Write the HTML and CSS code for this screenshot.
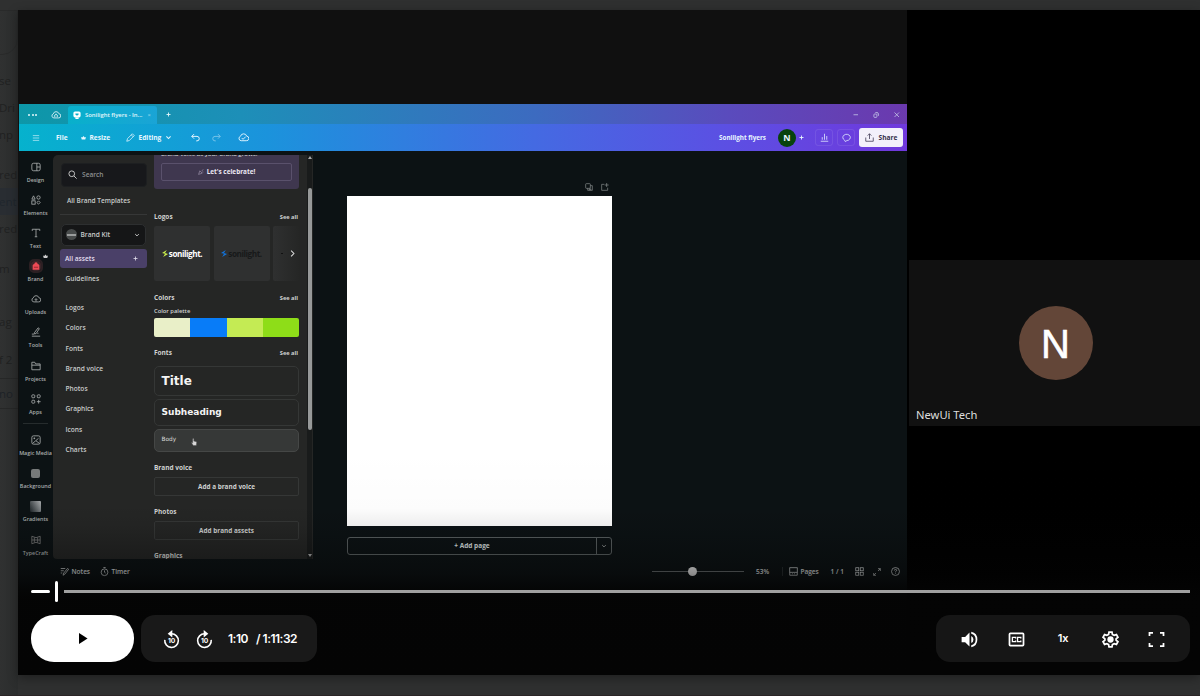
FILE: index.html
```html
<!DOCTYPE html>
<html lang="en">
<head>
<meta charset="utf-8">
<title>Recording player</title>
<link rel="stylesheet" href="styles.css">
</head>
<body>
<svg width="0" height="0" class="defs">
  <defs>
    <symbol id="chev" viewBox="0 0 10 10"><path d="M2 3.5l3 3 3-3"/></symbol>
    <symbol id="plus" viewBox="0 0 10 10"><path d="M5 1v8M1 5h8"/></symbol>
    <symbol id="cloud" viewBox="0 0 24 24"><path d="M7 19a5 5 0 0 1-1.500-9.700A7 7 0 0 1 19 9a5 5 0 0 1-1 10z"/></symbol>
  </defs>
</svg>
<div class="page">
  <aside class="backdrop">
    <div class="chip"></div>
    <p class="frag f1">se</p><p class="frag">Dri</p><p class="frag">np</p>
    <p class="frag f2">red</p><p class="frag hl">ent</p><p class="frag">red</p>
    <p class="frag f3">m</p><p class="frag f4">ag</p><p class="frag f5">f 2</p><p class="frag f6">no</p>
  </aside>

  <main class="player">
    <div class="stage">
      <section class="recording">
        <div class="editor">
          <header class="tabs">
            <span class="dots"><i></i><i></i><i></i></span>
            <svg class="ic home" viewBox="0 0 24 24"><use href="#cloud"/><path d="M9 17v-5l3-2.500 3 2.500v5"/></svg>
            <div class="tab">
              <svg class="tabic" viewBox="0 0 10 10"><rect x="0.500" y="0.500" width="9" height="7.500" rx="2"/><path d="M3 8h4v2H3z"/><path class="cut" d="M3 3h4v1.500L5 6 3 4.500z"/></svg>
              <span>Sonilight flyers - In...</span><em>×</em>
            </div>
            <svg class="ic newtab"><use href="#plus"/></svg>
            <div class="wins">
              <svg class="ic" viewBox="0 0 10 10"><path d="M2 5h6"/></svg>
              <svg class="ic" viewBox="0 0 10 10"><rect x="2.500" y="4" width="4" height="4.500" rx="1"/><path d="M4.500 2h2a2 2 0 0 1 2 2v2.500"/></svg>
              <svg class="ic" viewBox="0 0 10 10"><path d="M2 2l6 6M8 2l-6 6"/></svg>
            </div>
          </header>
          <div class="toolbar">
            <svg class="ic burger" viewBox="0 0 10 10"><path d="M1 2h8M1 5h8M1 8h8"/></svg>
            <b class="file">File</b>
            <svg class="crown" viewBox="0 0 10 10"><path d="M0 3l2.500 1L5 1l2.500 3L10 3 8.500 8h-7z"/></svg>
            <b class="resize">Resize</b>
            <svg class="ic pen" viewBox="0 0 12 12"><path d="M1 11l1-3.500L8.500 1l2.500 2.500L4.500 10zM7 2.500L9.500 5"/></svg>
            <b class="editing">Editing</b>
            <svg class="ic chv"><use href="#chev"/></svg>
            <svg class="ic undo" viewBox="0 0 12 12"><path d="M4 1.500L1 4.500l3 3M1 4.500h7a3 3 0 0 1 0 6H7"/></svg>
            <svg class="ic redo" viewBox="0 0 12 12"><path d="M8 1.500l3 3-3 3M11 4.500H4a3 3 0 0 0 0 6h1"/></svg>
            <svg class="ic saved" viewBox="0 0 24 24"><use href="#cloud"/><path d="M8 13l3 3 6-6"/></svg>
            <div class="right">
              <b class="doc">Sonilight flyers</b>
              <span class="me">N</span>
              <svg class="ic add"><use href="#plus"/></svg>
              <span class="tbtn"><svg class="ic" viewBox="0 0 12 12"><path d="M1 11h10M3 9V5.500M6 9V1M9 9V4"/></svg></span>
              <span class="tbtn cm"><svg class="ic" viewBox="0 0 12 12"><path d="M3.500 9.500a5 4.200 0 1 1 3 .6L4.500 11.500z"/></svg></span>
              <span class="share"><svg viewBox="0 0 12 12"><path d="M1 6v5h10V6M6 8V1M3.500 3.500L6 1l2.500 2.500"/></svg>Share</span>
            </div>
          </div>
          <div class="work">
            <nav class="rail">
              <div><svg viewBox="0 0 12 12"><rect x="1" y="1.500" width="10" height="9" rx="2"/><path d="M7 1.500v9M7 6h4"/></svg>Design</div>
              <div><svg viewBox="0 0 12 12"><path d="M3 1l2 4H1z"/><circle cx="9" cy="3" r="2"/><rect x="1" y="7" width="4" height="4"/><path d="M9 7l2 2-2 2-2-2z"/></svg>Elements</div>
              <div><svg viewBox="0 0 12 12"><path d="M1.500 3.500v-2h9v2M6 1.500v9M4.500 10.500h3"/></svg>Text</div>
              <div class="on"><svg viewBox="0 0 12 12"><path d="M2 5q0-1 2-1.500Q4 1.500 6 1.500T8 3.500Q10 4 10 5v5.500H2z"/><path class="slot" d="M3.500 7.500h5"/></svg>Brand<span class="tiny"><svg viewBox="0 0 10 10"><path d="M0 3l2.500 1L5 1l2.500 3L10 3 8.500 8h-7z"/></svg></span></div>
              <div><svg viewBox="0 0 24 24"><use href="#cloud"/><path d="M12 18v-6M9 14l3-3 3 3"/></svg>Uploads</div>
              <div><svg viewBox="0 0 12 12"><path d="M4 7l4.500-6L10 2 6 8H4zM1 8.500h3M1 11h10M9 7.500H7.500"/></svg>Tools</div>
              <div><svg viewBox="0 0 12 12"><path d="M1 10.500v-9h3.500l1 2H11v7zM1 5h10"/></svg>Projects</div>
              <div><svg viewBox="0 0 12 12"><rect x="1" y="1" width="3.500" height="3.500" rx="1"/><rect x="7.500" y="1" width="3.500" height="3.500" rx="1"/><rect x="1" y="7.500" width="3.500" height="3.500" rx="1"/><path d="M9.200 7v4.500M7 9.200h4.500"/></svg>Apps</div>
              <hr>
              <div><svg viewBox="0 0 12 12"><rect x="1" y="1" width="10" height="10" rx="2"/><path d="M2 10l7-6M6 7l4 3M4 3v2M3 4h2"/></svg>Magic Media</div>
              <div><span class="bgsq"></span>Background</div>
              <div><span class="bgsq grad"></span>Gradients</div>
              <div><svg class="tc" viewBox="0 0 12 12"><path d="M1 1.500Q6 5 11 1.500v9Q6 7 1 10.500zM4 3v6M8 3v6M1 6h10"/></svg>TypeCraft</div>
            </nav>
            <div class="body">
              <div class="upper">
                <div class="panel">
                  <div class="menu">
                    <div class="search"><svg viewBox="0 0 12 12"><circle cx="5" cy="5" r="3.800"/><path d="M8 8l3.500 3.500"/></svg>Search</div>
                    <div class="tpl">All Brand Templates</div>
                    <div class="kit"><span class="disc"><i></i></span>Brand Kit<svg class="ic"><use href="#chev"/></svg></div>
                    <div class="assets-on">All assets<svg class="ic"><use href="#plus"/></svg></div>
                    <div class="guide">Guidelines</div>
                    <ul><li>Logos</li><li>Colors</li><li>Fonts</li><li>Brand voice</li><li>Photos</li><li>Graphics</li><li>Icons</li><li>Charts</li></ul>
                  </div>
                  <div class="assets">
                    <div class="promo"><p>Brand voice as your brand grows.</p><div class="cele"><svg viewBox="0 0 10 10"><path d="M1 9l2-6 4 4z"/><path d="M6 3l3-2M7 5h2"/></svg>Let's celebrate!</div></div>
                    <div class="head h-logos"><b>Logos</b><span>See all</span></div>
                    <div class="tiles">
                      <div class="tile"><svg viewBox="0 0 10 12"><path d="M8 0L0 5l5 1.500L2 12l8-5-5-2z"/></svg><b>sonilight.</b></div>
                      <div class="tile blue"><svg viewBox="0 0 10 12"><path d="M8 0L0 5l5 1.500L2 12l8-5-5-2z"/></svg><b>sonilight.</b></div>
                      <div class="tile last"><i></i><svg class="ic" viewBox="0 0 10 10"><path d="M3 1l4 4-4 4"/></svg></div>
                    </div>
                    <div class="head h-colors"><b>Colors</b><span>See all</span></div>
                    <div class="sub">Color palette</div>
                    <div class="swatches"><i class="s1"></i><i class="s2"></i><i class="s3"></i><i class="s4"></i></div>
                    <div class="head h-fonts"><b>Fonts</b><span>See all</span></div>
                    <div class="font t1">Title</div>
                    <div class="font t2">Subheading</div>
                    <div class="font t3">Body<svg class="hand" viewBox="0 0 12 16"><path d="M3.500 1.500q1.300-1.200 2.200 0V6l5 1.500q.8.500.6 2L10.500 15h-6L1 9.500q.3-1.400 2.500 0z"/></svg></div>
                    <div class="head h-voice"><b>Brand voice</b></div>
                    <div class="btn">Add a brand voice</div>
                    <div class="head h-photos"><b>Photos</b></div>
                    <div class="btn">Add brand assets</div>
                    <div class="head h-graph"><b>Graphics</b></div>
                  </div>
                  <div class="scroll"><i class="up"></i><i class="thumb"></i><i class="down"></i></div>
                </div>
                <div class="canvas">
                  <div class="sheetwrap">
                    <div class="sheet-tools">
                      <svg viewBox="0 0 12 12"><rect x="1" y="1" width="7" height="7" rx="1"/><path d="M8 4h3v7H4V8M5.500 9.500h4M7.500 7v4"/></svg>
                      <svg viewBox="0 0 12 12"><path d="M5 2H1v9h9V7M8.500 0v6M5.500 3h6"/></svg>
                    </div>
                    <div class="sheet"></div>
                    <div class="addpage"><span>+ Add page</span><em><svg class="ic"><use href="#chev"/></svg></em></div>
                  </div>
                </div>
              </div>
              <footer class="status">
                <svg viewBox="0 0 12 12"><path d="M1 2h6M1 5h4M1 8h2M4 11l1-3 5-6 1.500 1-5 6.500z"/></svg><span class="notes">Notes</span>
                <svg viewBox="0 0 12 12"><circle cx="6" cy="7" r="4.500"/><path d="M6 4.500V7l1.500 1M4.500.7h3"/></svg><span>Timer</span>
                <div class="rt">
                  <div class="zoom"><i></i></div><span class="pct">53%</span>
                  <svg class="pg" viewBox="0 0 12 12"><rect x="1" y="1" width="10" height="6"/><path d="M1 7v4h10V7M4 9h1M7 9h1"/></svg><span class="pages">Pages</span><span class="num">1 / 1</span>
                  <svg viewBox="0 0 12 12"><rect x="1" y="1" width="4" height="4"/><rect x="7" y="1" width="4" height="4"/><rect x="1" y="7" width="4" height="4"/><rect x="7" y="7" width="4" height="4"/></svg>
                  <svg class="ex" viewBox="0 0 12 12"><path d="M7.500 1H11v3.500M11 1L7.500 4.500M4.500 11H1V7.500M1 11l3.500-3.500"/></svg>
                  <svg class="help" viewBox="0 0 12 12"><circle cx="6" cy="6" r="5.300"/><path d="M4.500 4.700q0-1.500 1.500-1.500t1.500 1.300Q7.500 5.500 6 6.300V7M6 8.300v.8"/></svg>
                </div>
              </footer>
            </div>
          </div>
        </div>
      </section>
      <section class="people">
        <div class="person"><div class="avatar">N</div><span class="name">NewUi Tech</span></div>
      </section>
    </div>

    <div class="controls">
      <div class="progress"><i class="played"></i><i class="knob"></i><i class="left"></i></div>
      <div class="bar">
        <div class="play"><svg viewBox="0 0 10 12"><path d="M0 0l9.500 6L0 12z"/></svg></div>
        <div class="pill skip">
          <svg viewBox="0 0 24 24"><path d="M3.500 12.500a8.600 8.600 0 1 0 8.500-7.700h-2"/><path class="solid" d="M13 0v9.600L7.200 4.800z"/><text x="12" y="16.500">10</text></svg>
          <svg viewBox="0 0 24 24"><path d="M20.500 12.500A8.600 8.600 0 1 1 12 4.800h2"/><path class="solid" d="M11 0v9.600L16.800 4.800z"/><text x="12" y="16.500">10</text></svg>
          <span class="now">1:10</span><span class="total">/ 1:11:32</span>
        </div>
        <div class="pill opts">
          <svg viewBox="0 0 24 24"><path class="fill" d="M3 9v6h4l5 5V4L7 9zM16.500 12A4.500 4.500 0 0 0 14 7.970v8.050A4.500 4.500 0 0 0 16.500 12zM14 3.230v2.060a7 7 0 0 1 0 13.420v2.060a9 9 0 0 0 0-17.540z"/></svg>
          <svg viewBox="0 0 24 24"><rect x="4" y="5" width="16" height="14" rx="1"/><path class="thin" d="M11 10.800V9.600H7.300v4.800H11v-1.200M16.900 10.800V9.600h-3.700v4.800h3.700v-1.200"/></svg>
          <b>1x</b>
          <svg class="gear" viewBox="0 0 24 24"><path d="M10.300 3.500h3.400l.5 2.700 2 1.100 2.600-.9 1.700 3-2.100 1.800v1.600l2.100 1.800-1.700 3-2.600-.9-2 1.100-.5 2.700h-3.400l-.5-2.700-2-1.100-2.600.9-1.700-3 2.100-1.800v-1.600L3.500 9.400l1.700-3 2.600.9 2-1.100z"/><circle class="fill" cx="12" cy="12" r="3.600"/></svg>
          <svg viewBox="0 0 24 24"><path d="M4 8V4.500h4M16 4.500h4V8M20 16v3.500h-4M8 19.500H4V16"/></svg>
        </div>
      </div>
    </div>
  </main>
</div>
</body>
</html>
```

FILE: styles.css
```css
* { box-sizing: border-box; margin: 0; padding: 0; }
html, body { width: 1200px; height: 696px; overflow: hidden; }
body { background: #2f3030; font-family: "Open Sans", "Noto Sans", sans-serif; }
.defs { display: block; }
i, em { font-style: normal; display: block; }
b { font-weight: 700; }
svg { fill: none; stroke: currentColor; stroke-width: 1; flex: none; overflow: visible; }
ul { list-style: none; }

.page { height: 696px; display: grid; grid-template-columns: 18px 1182px; padding-top: 10px; position: relative; border-bottom: 1px solid #2b2526; overflow: hidden; }
.backdrop { overflow: hidden; background: linear-gradient(90deg, #303131, #2b2d2d); font-size: 11.500px; color: #202121; white-space: nowrap; }
.chip { height: 45px; margin-left: -30px; border: 1px solid #292a2a; border-radius: 0 0 16px 0; }
.frag { height: 27px; line-height: 27px; margin-left: -1px; }
.f1 { margin-top: 12px; }
.f2 { margin-top: 13px; }
.hl { background: #292d32; color: #20262d; }
.f3 { margin-top: 13px; }
.f4 { margin-top: 26px; }
.f5 { margin-top: 11px; }
.f6 { margin-top: 5px; border-top: 1px solid #262727; border-bottom: 1px solid #262727; height: 31px; line-height: 29px; color: #1d2227; }

.player { position: relative; height: 665px; background: #000; box-shadow: 0 3px 10px rgba(0,0,0,.35); }
.stage { display: flex; height: 665px; }
.recording { width: 889px; padding: 94px 0 0 1px; background: #101010; }
.editor { height: 571px; display: grid; grid-template-rows: 20px 27px 1fr; background: #0c1214; color: #d5d8d8; font-size: 6.5px; }
.ic { width: 8px; height: 8px; }

.tabs { display: flex; align-items: center; background: linear-gradient(90deg, #0d97a8, #1d8fb8 25%, #3c6bc0 58%, #5a4bbd 80%, #6b39ae); color: #e4f7fb; padding-top: 1px; }
.dots { display: flex; gap: 1.500px; margin-left: 9px; width: 23px; }
.dots i { width: 2px; height: 2px; border-radius: 1px; background: #e4f7fb; }
.home { width: 10px; height: 10px; stroke-width: 2; margin-right: 7px; }
.tab { width: 89px; height: 18px; align-self: flex-end; margin-top: 1px; background: linear-gradient(90deg, #08b0cb, #1aa4d6); border-radius: 3px 3px 0 0; display: flex; align-items: center; padding-left: 5px; font-weight: 600; font-size: 5.900px; white-space: nowrap; }
.tabic { width: 8px; height: 8px; fill: #fff; stroke: none; margin-right: 4px; }
.tabic .cut { fill: #0aaccb; }
.tab em { margin-left: 5px; opacity: .5; }
.newtab { width: 5px; height: 5px; margin-left: 9px; stroke-width: 1.800; }
.wins { margin-left: auto; display: flex; gap: 13px; margin-right: 7px; opacity: .8; }
.wins svg { width: 7.500px; height: 7.500px; }
.toolbar { display: flex; align-items: center; background: linear-gradient(90deg, #06b2cd, #1b93dc 28%, #446ae2 58%, #5c4fe3 80%, #7038dc); color: #e8f7ff; white-space: nowrap; font-size: 6.600px; }
.burger { margin-left: 13px; margin-right: 16px; opacity: .75; }
.file { width: 25px; }
.crown { width: 5px; height: 6px; fill: currentColor; stroke: none; margin-right: 3.500px; }
.resize { width: 36px; }
.pen { width: 9px; height: 9px; }
.editing { margin-left: 4px; width: 26px; }
.chv { width: 7px; height: 7px; margin-right: 19px; stroke-width: 1.500; }
.undo, .redo { width: 9px; height: 9px; stroke-width: 1.300; margin-right: 12.500px; }
.redo { opacity: .45; margin-right: 17px; }
.saved { width: 11px; height: 11px; stroke-width: 2; }
.right { margin-left: auto; display: flex; align-items: center; margin-right: 4px; }
.doc { margin-right: 12px; font-size: 6.300px; }
.me { width: 18px; height: 18px; border-radius: 50%; background: #07430d; font-size: 9px; font-weight: 700; display: grid; place-items: center; line-height: 1; }
.add { width: 5px; height: 5px; margin: 0 11px 0 3px; stroke-width: 1.800; }
.tbtn { width: 18px; height: 17px; border: 1px solid rgba(255,255,255,.09); border-radius: 3px; display: grid; place-items: center; margin-right: 4px; }
.tbtn svg { width: 9px; height: 9px; }
.share { width: 44px; height: 19px; background: #f3f0fb; color: #35304c; border-radius: 3px; display: flex; align-items: center; justify-content: center; gap: 5px; font-weight: 700; }
.share svg { width: 9px; height: 9px; }

.work { display: flex; height: 524px; }
.rail { width: 33px; margin-right: 1px; padding-top: 9.500px; font-size: 5.400px; font-weight: 600; color: #a9adad; }
.rail div { height: 33.200px; display: flex; flex-direction: column; align-items: center; gap: 4px; line-height: 8px; white-space: nowrap; position: relative; }
.rail svg { width: 10px; height: 10px; margin-top: 1px; }
.rail svg[viewBox="0 0 24 24"] { stroke-width: 2; }
.rail hr { border: 0; border-top: 1px solid #262c2d; margin: -3px 4px 10px; }
.rail .on svg { background: #3b2428; border-radius: 3px; fill: #ed4a55; stroke: none; outline: 2px solid #2c2023; }
.rail .on .slot { stroke: #8d2028; }
.rail .on .tiny { position: absolute; right: 4px; top: -7px; }
.rail .on .tiny svg { width: 5px; height: 5px; background: none; outline: 0; fill: #ccc; }
.bgsq { width: 9px; height: 9px; border-radius: 2px; background: #777a7a; margin: 2px 0 0; }
.bgsq.grad { width: 11px; height: 11px; border-radius: 1px; margin: 1px 0 -1px; background: linear-gradient(60deg, #1b2225, #a8abad); }
.tc { color: #777; }

.body { width: 854px; display: flex; flex-direction: column; }
.upper { display: flex; height: 408px; }
.panel { width: 260px; height: 404px; margin-top: 4px; background: #252625; border-radius: 5px 0 0 4px; display: flex; overflow: hidden; }
.menu { width: 101px; padding: 7.500px 7px 0 7px; color: #c9cbca; font-size: 6.600px; font-weight: 600; }
.search { width: 86px; margin-left: 1px; height: 24.500px; border: 1px solid #1d1f21; border-radius: 4px; background: #17181b; display: flex; align-items: center; padding-left: 6px; gap: 5px; color: #8e9090; }
.search svg { width: 9px; height: 9px; color: #c4c4c4; stroke-width: 1.300; }
.tpl { height: 28px; line-height: 27px; padding-left: 7px; border-bottom: 1px solid #363737; white-space: nowrap; font-size: 6.500px; }
.kit { margin: 8.500px 0 3.500px 1px; width: 85px; height: 22px; background: #151617; border: 1px solid #2d2f30; border-radius: 5px; display: flex; align-items: center; padding: 0 5px 0 4px; gap: 3.500px; }
.kit .disc { width: 11px; height: 11px; border-radius: 50%; background: #484b4b; display: grid; place-items: center; }
.kit .disc i { width: 9px; height: 2px; background: #9a9c9c; }
.kit .ic { width: 6px; height: 6px; margin-left: auto; stroke-width: 1.600; }
.assets-on { width: 87px; height: 19px; background: #4a4068; border-radius: 3px; display: flex; align-items: center; justify-content: space-between; padding: 0 9px 0 5px; color: #e2deee; }
.assets-on .ic { width: 5px; height: 5px; stroke-width: 1.600; }
.guide { height: 22px; line-height: 22px; padding-left: 5.500px; margin-bottom: 7px; }
.menu li { height: 20.300px; line-height: 21px; padding-left: 5.500px; }

.assets { width: 145px; color: #d0d2d1; }
.promo { height: 33.500px; background: #3f374f; border-radius: 0 0 3px 3px; padding: 0 7px; }
.promo p { font-size: 6px; font-weight: 600; height: 8px; line-height: 8px; position: relative; top: -5px; white-space: nowrap; }
.cele { height: 18px; border: 1px solid #5a516c; border-radius: 2px; display: flex; align-items: center; justify-content: center; gap: 3px; font-weight: 700; font-size: 6.400px; color: #ebe8f2; padding-bottom: 1px; }
.cele svg { width: 6px; height: 6px; color: #a59ab4; }
.head { display: flex; justify-content: space-between; align-items: center; height: 10px; font-size: 6.500px; padding-right: 1px; }
.head span { font-size: 5.700px; font-weight: 700; }
.h-logos { margin-top: 23px; }
.tiles { display: flex; gap: 3.500px; height: 55px; margin-top: 4px; overflow: hidden; }
.tile { width: 56px; height: 55px; flex: none; background: #2f3030; border-radius: 2px; display: flex; align-items: center; justify-content: center; gap: 1px; color: #fff; font-size: 8.200px; letter-spacing: -.45px; }
.tile svg { width: 6px; height: 9px; fill: #c9ee4c; stroke: none; }
.tile.blue { color: #17191a; }
.tile.blue svg { fill: #1272d8; }
.tile.last { width: 27px; background: linear-gradient(90deg, #2f3030, #252625); justify-content: flex-start; padding-left: 8px; }
.tile.last i { width: 2px; height: 1px; background: #111; }
.tile.last .ic { fill: none; stroke: #ddd; stroke-width: 1.500; width: 7px; height: 7px; margin-left: 5px; }
.h-colors { margin-top: 12px; }
.sub { height: 9px; line-height: 9px; font-size: 5.800px; font-weight: 600; margin: 4px 0 2px; }
.swatches { display: grid; grid-template-columns: repeat(4, 1fr); height: 19px; border-radius: 2px; overflow: hidden; }
.s1 { background: #e9efc8; } .s2 { background: #087cf8; } .s3 { background: #c4eb54; } .s4 { background: #8edd18; }
.h-fonts { margin: 11px 0 8px; }
.font { border: 1px solid #353736; border-radius: 5px; display: flex; align-items: center; padding-left: 6.500px; font-family: "DejaVu Sans", sans-serif; color: #f4f4f4; }
.t1 { height: 30px; font-size: 12px; font-weight: 700; }
.t2 { height: 27px; margin-top: 3px; font-size: 9px; font-weight: 700; }
.t3 { height: 23px; margin-top: 3px; font-size: 5.800px; background: #363837; border-color: #454746; padding-bottom: 2px; color: #d8d8d8; }
.hand { width: 6px; height: 10px; margin: 6px 0 0 15px; fill: #d8d8d8; stroke: #555; }
.h-voice { margin-top: 11px; }
.btn { height: 19px; margin-top: 4px; border: 1px solid #353736; border-radius: 2px; display: grid; place-items: center; font-size: 6.400px; font-weight: 700; }
.h-photos { margin-top: 11px; }
.h-graph { margin-top: 11px; }
.scroll { width: 5px; margin-left: 8px; background: #191b1b; display: flex; flex-direction: column; align-items: center; padding: 1px 0 2px; }
.up, .down { border: 2px solid transparent; border-top-width: 0; border-bottom: 3px solid #a7a7a7; }
.down { border-bottom-width: 0; border-top: 3px solid #a7a7a7; margin-top: auto; }
.thumb { width: 4px; height: 242px; border-radius: 2px; background: #979999; margin-top: 29px; }

.canvas { flex: 1; padding: 31px 0 0 34px; }
.sheetwrap { width: 265px; }
.sheet-tools { height: 13.500px; display: flex; justify-content: flex-end; gap: 8px; padding: 1px 3px 0 0; color: #8c9191; }
.sheet-tools svg { width: 8px; height: 8px; }
.sheet { height: 330px; background: #fff; }
.addpage { margin-top: 11px; height: 18.500px; border: 1px solid #5a6061; border-radius: 3px; display: flex; font-weight: 700; color: #dfe2e2; font-size: 6.500px; }
.addpage span { flex: 1; display: grid; place-items: center; }
.addpage em { width: 15px; border-left: 1px solid #5a6061; display: grid; place-items: center; }
.addpage .ic { width: 6px; height: 6px; }
.status { height: 25px; display: flex; align-items: center; padding: 0 7px 0 7px; font-size: 6.500px; font-weight: 600; color: #e8ecec; }
.status svg { width: 9px; height: 9px; margin-right: 2.500px; }
.notes { width: 28.500px; }
.rt { margin-left: auto; display: flex; align-items: center; }
.zoom { width: 92px; height: 9px; background: linear-gradient(#6b7172, #6b7172) center / 100% 1px no-repeat; margin-right: 12px; }
.zoom i { width: 9px; height: 9px; margin-left: 35.500px; border-radius: 50%; background: #fff; }
.pct { width: 27px; border-right: 1px solid #2a3032; margin-right: 6px; }
.pages { width: 30px; }
.num { width: 24px; }
.status .ex { margin: 0 10px 0 7px; width: 8px; height: 8px; }
.status .help { margin-right: 0; width: 9px; height: 9px; }

.people { flex: 1; background: #000; padding: 250px 0 0 2px; }
.person { height: 166px; background: #111; display: grid; place-items: center; position: relative; padding: 0 0 1px 2px; }
.avatar { width: 74px; height: 74px; border-radius: 50%; background: #634638; color: #fff; font: 400 40px/76px "Liberation Sans", sans-serif; text-align: center; -webkit-text-stroke: .6px #fff; }
.name { position: absolute; left: 7px; bottom: 3px; font: 400 11.200px/17px "Noto Sans", sans-serif; color: #dedede; white-space: nowrap; }

.controls { position: absolute; left: 0; right: 0; bottom: 0; height: 225px; padding: 131px 10px 0 13px; background: linear-gradient(rgba(4,4,4,0), rgba(4,4,4,.01) 26%, rgba(4,4,4,.07) 34%, rgba(4,4,4,.28) 47%, rgba(4,4,4,.45) 55%, rgba(4,4,4,.85) 62%, rgba(4,4,4,.98) 66%, #040404); color: #fff; }
.progress { display: flex; align-items: center; height: 21px; }
.progress i { height: 3.500px; border-radius: 2px; }
.progress .played { width: 19px; background: #fff; margin-right: 4.500px; }
.progress .knob { width: 3.500px; height: 21px; background: #fff; margin-right: 5.500px; }
.progress .left { flex: 1; background: #a0a0a0; border-radius: 0; }
.bar { display: flex; margin-top: 13px; height: 46.500px; }
.play { width: 103px; border-radius: 23px; background: #fff; display: grid; place-items: center; padding-left: 2px; }
.play svg { width: 9px; height: 11px; fill: #000; stroke: none; }
.pill { background: #191919; border-radius: 14px; display: flex; align-items: center; font-family: Inter, sans-serif; }
.pill svg { width: 22px; height: 22px; stroke-width: 2; }
.skip { width: 176px; margin-left: 7px; padding-left: 21px; }
.skip svg { width: 19px; height: 19px; margin: 2px 14px 0 0; }
.skip svg .solid { fill: #fff; stroke: none; }
.skip text { font: 700 8.500px Inter, sans-serif; fill: #fff; stroke: none; text-anchor: middle; letter-spacing: -.3px; }
.skip span { font-size: 12px; font-weight: 600; white-space: nowrap; letter-spacing: -.5px; }
.skip .now { width: 28px; }
.opts { width: 254px; margin-left: auto; padding: 2px 23px 0; justify-content: space-between; background: #161616; }
.opts svg { width: 21px; height: 21px; }
.opts .fill { fill: #fff; stroke: none; }
.opts .thin { stroke-width: 1.500; }
.opts b { width: 22px; text-align: center; font-size: 11px; font-weight: 600; letter-spacing: -.3px; margin-top: -3px; }
```
